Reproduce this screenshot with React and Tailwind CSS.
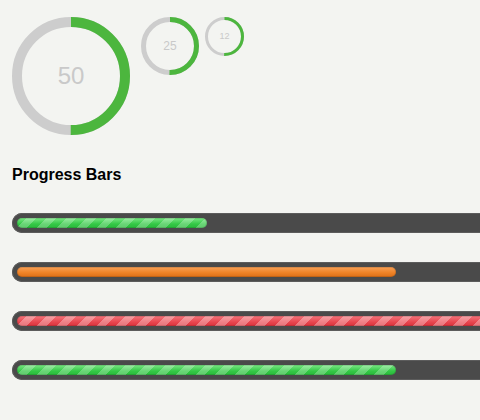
import React from 'react';

const rings = [
  { size: 118, stroke: 10, label: '50', text: 'text-[24px]', gap: '' },
  { size: 58, stroke: 5, label: '25', text: 'text-[12px]', gap: 'ml-[11px]' },
  { size: 39, stroke: 3, label: '12', text: 'text-[9px]', gap: 'ml-[6px]' },
];

const bars = [
  {
    pct: 25,
    fill: 'bg-[image:repeating-linear-gradient(135deg,rgba(255,255,255,0)_0_7px,rgba(255,255,255,0.26)_7px_14px),linear-gradient(to_bottom,#7ae884,#34c846_60%,#2ab93b)]',
  },
  {
    pct: 50,
    fill: 'bg-[image:linear-gradient(to_bottom,#f7a057,#f08428_55%,#dc6f17)]',
  },
  {
    pct: 100,
    fill: 'bg-[image:repeating-linear-gradient(135deg,rgba(255,255,255,0)_0_7px,rgba(255,255,255,0.32)_7px_14px),linear-gradient(to_bottom,#f4747b,#e8464f_60%,#d9343d)]',
  },
  {
    pct: 50,
    fill: 'bg-[image:repeating-linear-gradient(135deg,rgba(255,255,255,0)_0_7px,rgba(255,255,255,0.26)_7px_14px),linear-gradient(to_bottom,#7ae884,#34c846_60%,#2ab93b)]',
  },
];

const Ring = ({ size, stroke, label, text, gap }) => {
  const r = (size - stroke) / 2;
  const c = 2 * Math.PI * r;
  return (
    <div className={`relative shrink-0 ${gap}`} style={{ width: size, height: size }}>
      <svg width={size} height={size} className="block">
        <circle cx={size / 2} cy={size / 2} r={r} fill="none" stroke="#cdcdcd" strokeWidth={stroke} />
        <circle
          cx={size / 2}
          cy={size / 2}
          r={r}
          fill="none"
          stroke="#4cb63e"
          strokeWidth={stroke}
          strokeDasharray={`${c / 2} ${c}`}
          transform={`rotate(-90 ${size / 2} ${size / 2})`}
        />
      </svg>
      <div className={`absolute inset-0 flex items-center justify-center text-[#c9c9c9] ${text}`}>
        {label}
      </div>
    </div>
  );
};

export default function App() {
  return (
    <div className="w-[480px] h-[420px] overflow-hidden bg-[#f3f4f1] font-['Liberation_Sans',Arial,sans-serif]">
      <div className="flex items-start pl-[12px] pt-[17px]">
        {rings.map((ring) => (
          <Ring key={ring.label} {...ring} />
        ))}
      </div>

      <h2 className="mt-[30px] pl-[12px] text-[16px] leading-[20px] font-bold text-black">Progress Bars</h2>

      <div className="mt-[28px] pl-[12px] flex flex-col gap-[29px]">
        {bars.map((bar, i) => (
          <div
            key={i}
            className="w-[768px] h-[20px] shrink-0 rounded-full bg-[#4a4a4a] p-[5px] shadow-[inset_0_0_0_1px_#5c5c5c]"
          >
            <div
              className={`h-[10px] rounded-full ${bar.fill} shadow-[inset_0_0_0_1px_rgba(0,0,0,0.12)]`}
              style={{ width: `${bar.pct}%` }}
            />
          </div>
        ))}
      </div>
    </div>
  );
}
